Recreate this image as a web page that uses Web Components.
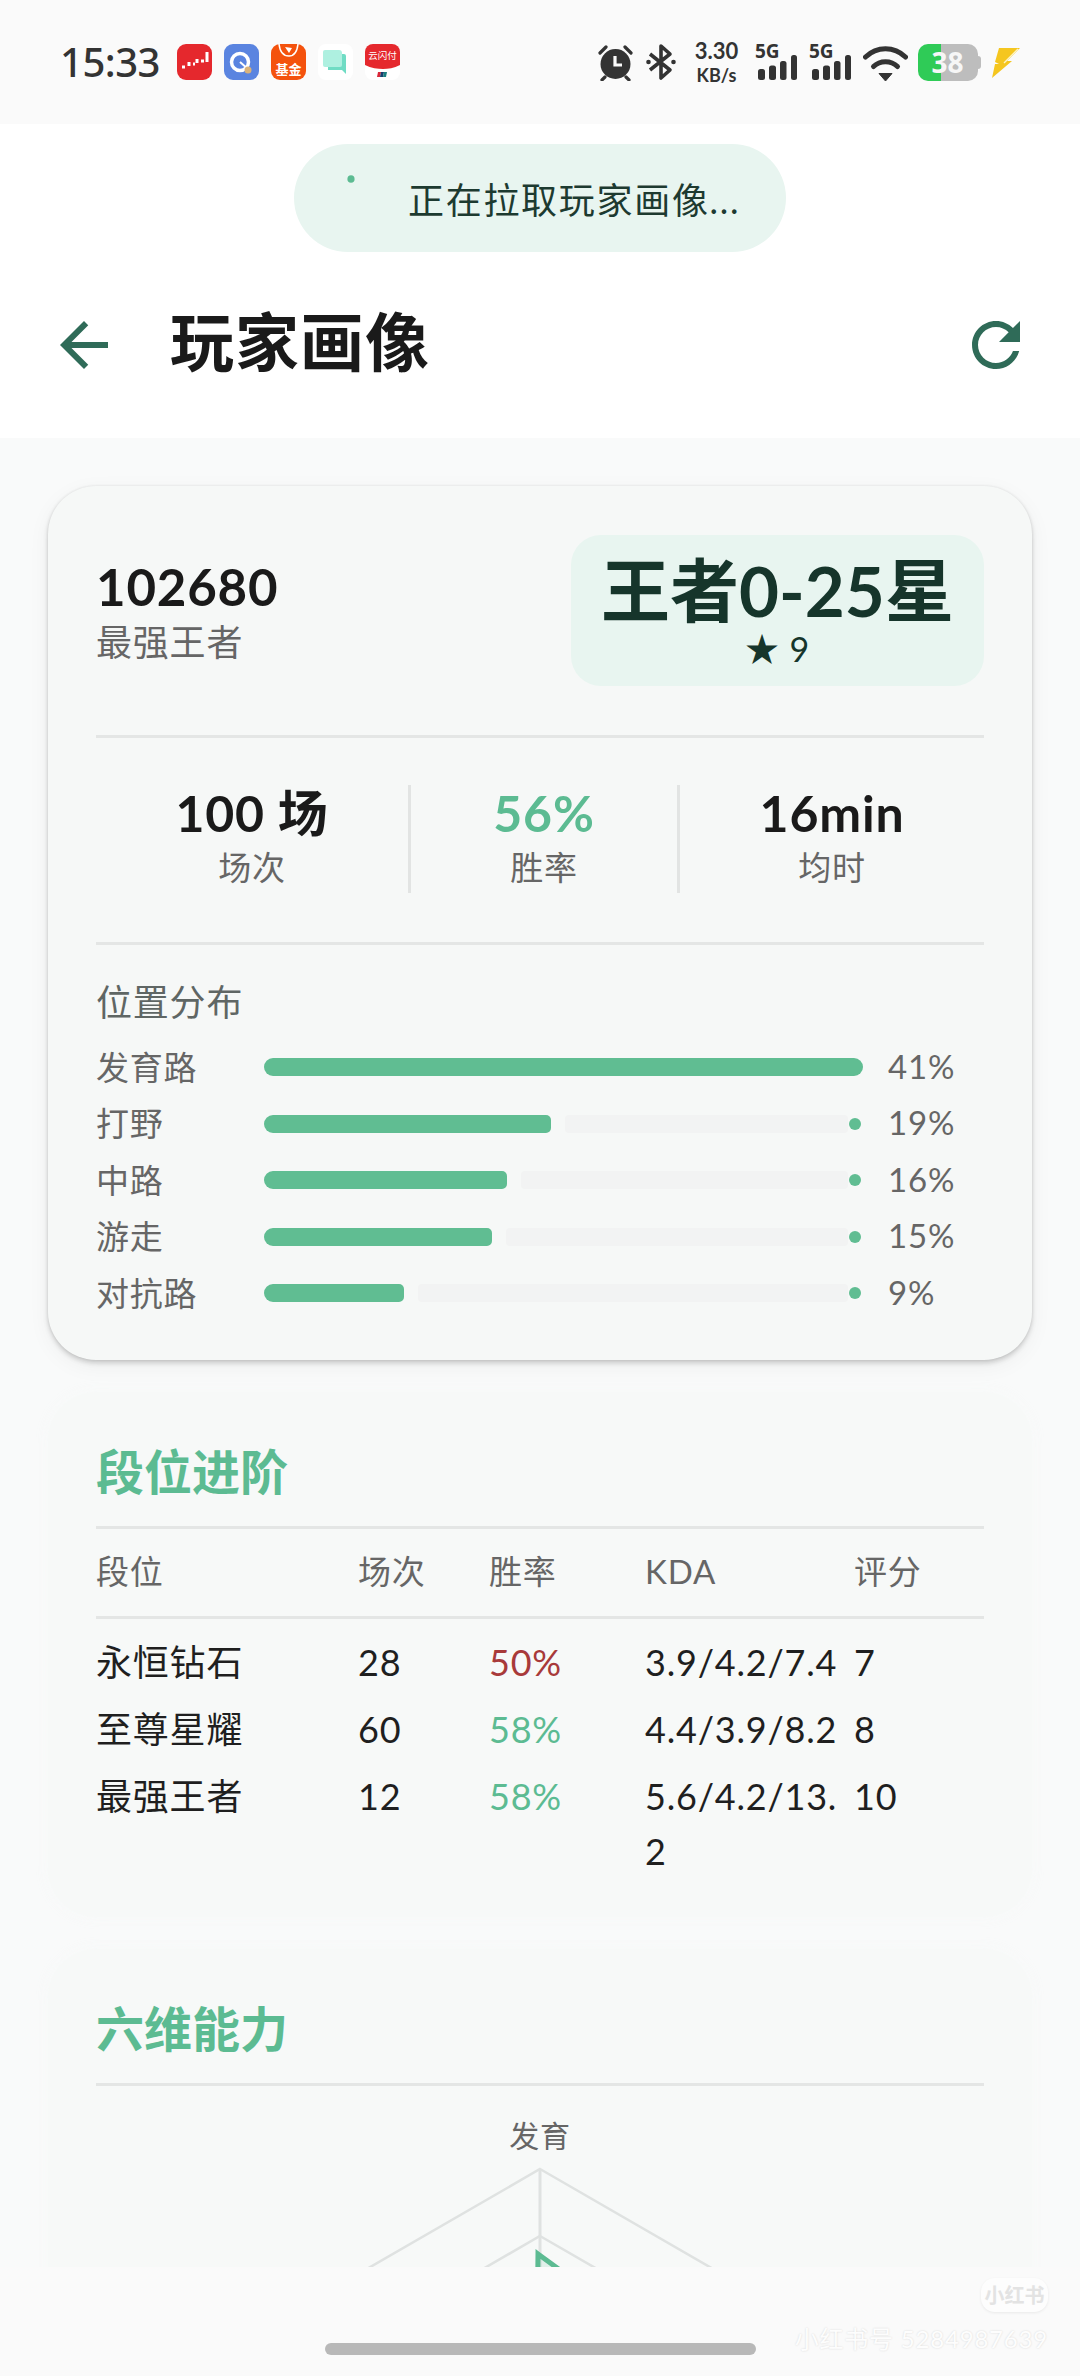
<!DOCTYPE html>
<html lang="zh">
<head>
<meta charset="utf-8">
<title>玩家画像</title>
<style>
  html, body { margin: 0; padding: 0; background: #f9fafa; }
  body { font-family: Lato, "Noto Sans CJK SC", sans-serif; color: #1a1a1a; letter-spacing: .8px; }
</style>
</head>
<body>
<app-shell>
  <status-bar slot="top"></status-bar>
  <load-toast slot="top">正在拉取玩家画像...</load-toast>
  <top-bar slot="top">玩家画像</top-bar>

  <player-card>
    <role-bar name="发育路" value="41" width="100"></role-bar>
    <role-bar name="打野" value="19" width="47.9"></role-bar>
    <role-bar name="中路" value="16" width="40.6"></role-bar>
    <role-bar name="游走" value="15" width="38.1"></role-bar>
    <role-bar name="对抗路" value="9" width="23.4"></role-bar>
  </player-card>

  <section-card heading="段位进阶" pad-bottom="32">
    <rank-row head rank="段位" games="场次" rate="胜率" kda="KDA" score="评分"></rank-row>
    <table-rule></table-rule>
    <div style="height:10px"></div>
    <rank-row rank="永恒钻石" games="28" rate="50%" tone="bad" kda="3.9/4.2/7.4" score="7"></rank-row>
    <rank-row rank="至尊星耀" games="60" rate="58%" tone="good" kda="4.4/3.9/8.2" score="8"></rank-row>
    <rank-row rank="最强王者" games="12" rate="58%" tone="good" kda="5.6/4.2/13.2" score="10"></rank-row>
  </section-card>

  <section-card heading="六维能力" pad-bottom="48">
    <radar-chart></radar-chart>
  </section-card>

  <home-bar slot="bottom"></home-bar>
  <water-mark slot="over"></water-mark>
</app-shell>

<script>
class AppShell extends HTMLElement {
  constructor() {
    super();
    this.attachShadow({ mode: 'open' });
    this.shadowRoot.innerHTML = `
      <style>
        :host { display: flex; flex-direction: column; position: relative; width: 1080px; height: 2376px; overflow: hidden; background: #fafafa; }
        #top { display: block; background: #fff; }
        #main { display: flex; flex-direction: column; gap: 32px; height: 1781px; padding: 48px 48px 0; overflow: hidden; background: #f9fafa; flex: none; }
        #bottom { flex: 1; }
      </style>
      <div id="top"><slot name="top"></slot></div>
      <div id="main"><slot></slot></div>
      <div id="bottom"><slot name="bottom"></slot></div>
      <slot name="over"></slot>
    `;
  }
}

class StatusBar extends HTMLElement {
  constructor() {
    super();
    this.attachShadow({ mode: 'open' });
    const signal = `
      <svg class="sig" width="42" height="44" viewBox="0 -6 42 44">
        <text x="0" y="15" font-size="19" font-weight="700" fill="#333" font-family="Noto Sans" letter-spacing="0">5G</text>
        <rect x="3" y="26" width="7" height="11" rx="2.5" fill="#333"/>
        <rect x="14" y="22.5" width="7" height="14.5" rx="2.5" fill="#333"/>
        <rect x="25" y="18" width="6.5" height="19" rx="2.5" fill="#333"/>
        <rect x="36" y="12" width="6" height="25" rx="2.5" fill="#333"/>
      </svg>`;
    this.shadowRoot.innerHTML = `
      <style>
        :host { display: flex; align-items: center; height: 124px; background: #fafafa; padding: 0 60px 0 60px; box-sizing: border-box; color: #333; letter-spacing: 0; font-family: "Noto Sans", "Noto Sans CJK SC", sans-serif; }
        #time { width: 99px; font-size: 40px; line-height: 40px; font-weight: 500; letter-spacing: -.5px; margin-right: 18px; white-space: nowrap; }
        #apps { display: flex; gap: 12px; }
        #apps svg { display: block; }
        #sys { display: flex; align-items: center; margin-left: auto; }
        #sys > * { flex: none; display: block; }
        #sys .sig { margin-top: -6px; }
        #speed { width: 45px; margin: 2px 16px 0 18px; text-align: center; font-family: Lato, sans-serif; font-weight: 700; }
        #speed div { white-space: nowrap; line-height: 24px; }
        #speed .a { font-size: 22px; }
        #speed .b { font-size: 18px; }
        #batt { position: relative; width: 63px; height: 37px; margin: 0 10px; }
        #batt i { position: absolute; top: 0; left: 0; width: 60px; height: 37px; border-radius: 10px; background: linear-gradient(90deg, #2fcb57 23px, #bdbdbd 23px); }
        #batt b { position: absolute; top: 12px; right: 0; width: 3px; height: 13px; background: #bdbdbd; border-radius: 0 3px 3px 0; }
        #batt span { position: relative; display: block; width: 59px; text-align: center; font-size: 28px; line-height: 37px; font-weight: 700; color: #f6f6f6; }
      </style>
      <div id="time">15:33</div>
      <div id="apps">
        <svg width="35" height="36" viewBox="0 0 35 36">
          <rect width="35" height="36" rx="9" fill="#e5282d"/>
          <path d="M5 23h3M12 22v-4M16 20h2M20 19v-4M24 17h3M30 18V8" stroke="#fff" stroke-width="3" fill="none"/>
        </svg>
        <svg width="35" height="36" viewBox="0 0 35 36">
          <rect width="35" height="36" rx="9" fill="#5a84e0"/>
          <circle cx="16" cy="18" r="8.5" fill="none" stroke="#fff" stroke-width="3.5"/>
          <path d="M16 18l8 7" stroke="#fff" stroke-width="2"/>
          <circle cx="24" cy="26" r="3.5" fill="#d9b27a"/>
        </svg>
        <svg width="35" height="36" viewBox="0 0 35 36">
          <rect width="35" height="36" rx="9" fill="#f4520d"/>
          <path d="M8 0c1 9 5 12 10 12s8-3 9-12" fill="none" stroke="#fff" stroke-width="1.5"/>
          <path d="M14 3l7 1-3 5z" fill="#fff"/>
          <text x="17.5" y="30" text-anchor="middle" font-size="13" font-weight="700" fill="#fff" font-family="Noto Sans CJK SC">基金</text>
        </svg>
        <svg width="35" height="36" viewBox="0 0 35 36">
          <rect width="35" height="36" rx="8" fill="#fff"/>
          <path d="M10 10h16a2 2 0 0 1 2 2v18l-4-4H10z" fill="#6fdcc4"/>
          <path d="M7 6h14a3 3 0 0 1 3 3v12a2 2 0 0 1-2 2H7a2 2 0 0 1-2-2V8a2 2 0 0 1 2-2z" fill="#aef0e0"/>
        </svg>
        <svg width="35" height="36" viewBox="0 0 35 36">
          <rect width="35" height="36" rx="8" fill="#fff"/>
          <path d="M0 8a8 8 0 0 1 8-8h19a8 8 0 0 1 8 8v13c-6 3-12 4-17 4S6 24 0 21z" fill="#e5282d"/>
          <text x="17.5" y="15" text-anchor="middle" font-size="9.5" fill="#fff" font-family="Noto Sans CJK SC">云闪付</text>
          <path d="M13 28h3l-1 5h-3z" fill="#d9283a"/>
          <path d="M16 28h3l-1 5h-3z" fill="#17406f"/>
          <path d="M19 28h3l-1 5h-3z" fill="#1a7f80"/>
        </svg>
      </div>
      <div id="sys">
        <svg width="35" height="37" viewBox="0 0 35 37">
          <path d="M2 9l6-6M33 9l-6-6M7 33l-3 3M28 33l3 3" stroke="#333" stroke-width="3.2" stroke-linecap="round"/>
          <circle cx="17.5" cy="20" r="15" fill="#333"/>
          <path d="M17 12v9h7" fill="none" stroke="#fafafa" stroke-width="3.2"/>
        </svg>
        <svg width="30" height="38" viewBox="0 0 30 38" style="margin-left:13px">
          <path d="M4 11l20 16-9 8V3l9 8L4 27" fill="none" stroke="#333" stroke-width="3.6" stroke-linejoin="round"/>
          <circle cx="2.5" cy="19" r="2.3" fill="#333"/><circle cx="27.5" cy="19" r="2.3" fill="#333"/>
        </svg>
        <div id="speed"><div class="a">3.30</div><div class="b">KB/s</div></div>
        ${signal}
        <span style="width:12px"></span>
        ${signal}
        <svg width="45" height="37" viewBox="0 0 45 37" style="margin-left:12px">
          <path d="M2.5 13C14 2 31 2 42.5 13" fill="none" stroke="#333" stroke-width="5" stroke-linecap="round"/>
          <path d="M10.5 22.5C17 16 28 16 34.5 22.5" fill="none" stroke="#333" stroke-width="5" stroke-linecap="round"/>
          <path d="M16 29.5h13l-6.5 7.5z" fill="#333" stroke="#333" stroke-width="1" stroke-linejoin="round"/>
        </svg>
        <div id="batt"><i></i><b></b><span>38</span></div>
        <svg width="29" height="31" viewBox="0 0 29 31">
          <path d="M8 1h21L16 14l5 0L1 31l3-14h4l-4-2z" fill="#f5c61f"/>
          <path d="M13 16L27 2" stroke="#fdf3c4" stroke-width="1.5"/>
        </svg>
      </div>
    `;
  }
}

class LoadToast extends HTMLElement {
  constructor() {
    super();
    this.attachShadow({ mode: 'open' });
    this.shadowRoot.innerHTML = `
      <style>
        :host { display: flex; justify-content: center; padding-top: 20px; background: #fff; }
        #pill { display: flex; align-items: center; width: 492px; height: 108px; box-sizing: border-box; padding-left: 48px; border-radius: 54px; background: #e8f5f0; color: #1d3a30; font-size: 36px; letter-spacing: 1.7px; white-space: nowrap; }
        svg { display: block; margin-right: 18px; flex: none; }
      </style>
      <div id="pill">
        <svg width="48" height="48" viewBox="0 0 48 48"><ellipse cx="9" cy="5" rx="3.6" ry="3.8" fill="#5cbb92"/></svg>
        <slot></slot>
      </div>
    `;
  }
}

class TopBar extends HTMLElement {
  constructor() {
    super();
    this.attachShadow({ mode: 'open' });
    this.shadowRoot.innerHTML = `
      <style>
        :host { display: flex; align-items: center; height: 186px; padding: 0 48px; background: #fff; }
        svg { display: block; flex: none; fill: #2f6b58; }
        h1 { margin: -6px 0 0 50px; font-size: 64px; line-height: 80px; font-weight: 700; letter-spacing: 1px; color: #1a1a1a; }
        #refresh { margin-left: auto; }
      </style>
      <svg width="72" height="72" viewBox="0 0 24 24"><path d="M20 11H7.83l5.59-5.59L12 4l-8 8 8 8 1.41-1.41L7.83 13H20v-2z"/></svg>
      <h1><slot></slot></h1>
      <svg id="refresh" width="72" height="72" viewBox="0 0 24 24"><path d="M17.65 6.35C16.2 4.9 14.21 4 12 4c-4.42 0-7.99 3.58-7.99 8s3.57 8 7.99 8c3.73 0 6.84-2.55 7.73-6h-2.08c-.82 2.33-3.04 4-5.65 4-3.31 0-6-2.69-6-6s2.69-6 6-6c1.66 0 3.14.69 4.22 1.78L13 11h7V4l-2.35 2.35z"/></svg>
    `;
  }
}

class PlayerCard extends HTMLElement {
  constructor() {
    super();
    this.attachShadow({ mode: 'open' });
    this.shadowRoot.innerHTML = `
      <style>
        :host { display: block; flex: none; box-sizing: border-box; height: 874px; padding: 49px 48px 0; border-radius: 48px; background: #f6f8f7;
          box-shadow: 0 3px 5px rgba(0,0,0,.17), 0 6px 22px rgba(0,0,0,.05), 0 0 3px rgba(0,0,0,.08); }
        #head { display: flex; justify-content: space-between; align-items: flex-start; }
        #who { margin-top: 22px; }
        #id { font-size: 51px; line-height: 60px; font-weight: 700; color: #1a1a1a; }
        #tier { font-size: 36px; line-height: 50px; color: #666; }
        #rank { width: 413px; height: 151px; box-sizing: border-box; padding-top: 18px; border-radius: 30px; background: #e8f5f0; text-align: center; color: #16352b; }
        #rank .big { font-size: 69px; line-height: 76px; font-weight: 700; letter-spacing: 0; white-space: nowrap; }
        #rank .star { font-size: 34px; line-height: 40px; }
        hr { border: 0; height: 3px; margin: 0; background: #e4e6e5; }
        #stats { display: grid; grid-template-columns: 312px 269px 307px; height: 108px; margin: 47px 0 49px; }
        stat-cell + stat-cell { border-left: 3px solid #e2e4e3; }
        #dist { margin-top: 32px; font-size: 36px; line-height: 50px; color: #5f6664; }
        #bars { margin-top: 12px; }
      </style>
      <div id="head">
        <div id="who"><div id="id">102680</div><div id="tier">最强王者</div></div>
        <div id="rank"><div class="big">王者0-25星</div><div class="star">★ 9</div></div>
      </div>
      <hr style="margin-top:49px">
      <div id="stats">
        <stat-cell value="100 场" label="场次"></stat-cell>
        <stat-cell value="56%" label="胜率" tone="good"></stat-cell>
        <stat-cell value="16min" label="均时"></stat-cell>
      </div>
      <hr>
      <div id="dist">位置分布</div>
      <div id="bars"><slot></slot></div>
    `;
  }
}

class StatCell extends HTMLElement {
  constructor() {
    super();
    this.attachShadow({ mode: 'open' });
    const good = this.getAttribute('tone') === 'good';
    this.shadowRoot.innerHTML = `
      <style>
        :host { display: block; text-align: center; }
        #v { font-size: 50px; line-height: 56px; font-weight: 700; color: ${good ? '#5cbb92' : '#1a1a1a'}; white-space: nowrap; }
        #l { font-size: 33px; line-height: 52px; color: #666; }
      </style>
      <div id="v">${this.getAttribute('value')}</div>
      <div id="l">${this.getAttribute('label')}</div>
    `;
  }
}

class RoleBar extends HTMLElement {
  constructor() {
    super();
    this.attachShadow({ mode: 'open' });
    const width = parseFloat(this.getAttribute('width'));
    const full = width >= 100;
    this.shadowRoot.innerHTML = `
      <style>
        :host { display: grid; grid-template-columns: 168px 599px 1fr; align-items: center; height: 56.5px; font-size: 33px; color: #666; }
        #name, #pct { padding-bottom: 3px; }
        #track { display: flex; position: relative; height: 18px; }
        #fill { height: 18px; width: ${width}%; background: #60bd92; border-radius: ${full ? '9px' : '9px 5px 5px 9px'}; flex: none; }
        #rest { flex: 1; margin: 0 15px 0 14px; height: 18px; background: #f2f3f3; border-radius: 4px; display: ${full ? 'none' : 'block'}; }
        #stop { position: absolute; right: 2px; top: 3px; width: 12px; height: 12px; border-radius: 50%; background: #60bd92; display: ${full ? 'none' : 'block'}; }
        #pct { padding-left: 25px; white-space: nowrap; }
      </style>
      <div id="name">${this.getAttribute('name')}</div>
      <div id="track"><div id="fill"></div><div id="rest"></div><div id="stop"></div></div>
      <div id="pct">${this.getAttribute('value')}%</div>
    `;
  }
}

class SectionCard extends HTMLElement {
  constructor() {
    super();
    this.attachShadow({ mode: 'open' });
    this.shadowRoot.innerHTML = `
      <style>
        :host { display: block; flex: none; padding: 48px 48px ${this.getAttribute('pad-bottom')}px; border-radius: 48px; background: #f7f9f8; box-shadow: 0 0 14px rgba(247,249,248,.9); }
        h2 { margin: 0 0 22px; font-size: 48px; line-height: 64px; font-weight: 700; letter-spacing: 0; color: #5cbb92; }
        hr { border: 0; height: 3px; margin: 0; background: #e4e6e5; }
      </style>
      <h2>${this.getAttribute('heading')}</h2>
      <hr>
      <slot></slot>
    `;
  }
}

class TableRule extends HTMLElement {
  constructor() {
    super();
    this.attachShadow({ mode: 'open' });
    this.shadowRoot.innerHTML = `<style>:host { display: block; height: 3px; background: #e4e6e5; }</style>`;
  }
}

class RankRow extends HTMLElement {
  constructor() {
    super();
    this.attachShadow({ mode: 'open' });
    const head = this.hasAttribute('head');
    const tone = this.getAttribute('tone');
    const rateColor = tone === 'bad' ? '#a83a3a' : tone === 'good' ? '#5cbb92' : 'inherit';
    const attr = (n) => this.getAttribute(n);
    this.shadowRoot.innerHTML = `
      <style>
        :host { display: grid; grid-template-columns: 262px 131px 156px 209px 1fr; align-items: start;
          ${head ? 'height: 87px; align-content: center; font-size: 33px; line-height: 50px; color: #666; padding-bottom: 0;' : 'padding: 6px 0; font-size: 36px; line-height: 55px; color: #1f1f1f;'} }
        #kda { padding-right: 13px; word-break: break-all; }
        #rate { color: ${rateColor}; }
        div { ${head ? 'margin-top: -3px;' : ''} }
      </style>
      <div>${attr('rank')}</div>
      <div>${attr('games')}</div>
      <div id="rate">${attr('rate')}</div>
      <div id="kda">${attr('kda')}</div>
      <div>${attr('score')}</div>
    `;
  }
}

class RadarChart extends HTMLElement {
  constructor() {
    super();
    this.attachShadow({ mode: 'open' });
    // centre sits below the fold, only the top of the chart shows
    const cx = 444, cy = 281;
    const ring = (r) => {
      const pts = [];
      for (let i = 0; i < 6; i++) {
        const a = (Math.PI / 3) * i - Math.PI / 2;
        pts.push((cx + r * Math.cos(a)).toFixed(1) + ',' + (cy + r * Math.sin(a)).toFixed(1));
      }
      return `<polygon points="${pts.join(' ')}" fill="none" stroke="#dfe2e1" stroke-width="2.5"/>`;
    };
    this.shadowRoot.innerHTML = `
      <style>
        :host { display: block; padding-top: 28px; text-align: center; }
        #top { font-size: 30px; line-height: 42px; color: #666; }
        svg { display: block; }
      </style>
      <div id="top">发育</div>
      <svg width="888" height="560" viewBox="0 0 888 560">
        ${ring(268)}${ring(201)}${ring(134)}${ring(67)}
        <path d="M${cx} ${cy}V13" stroke="#dfe2e1" stroke-width="3"/>
        <polygon points="442,98 560,184 440,300" fill="#5cbb92" fill-opacity=".15" stroke="#5cbb92" stroke-width="5" stroke-linejoin="miter"/>
      </svg>
    `;
  }
}

class HomeBar extends HTMLElement {
  constructor() {
    super();
    this.attachShadow({ mode: 'open' });
    this.shadowRoot.innerHTML = `
      <style>
        :host { display: flex; justify-content: center; padding-top: 76px; }
        div { width: 431px; height: 12px; border-radius: 6px; background: #b8b8b8; }
      </style>
      <div></div>
    `;
  }
}

class WaterMark extends HTMLElement {
  constructor() {
    super();
    this.attachShadow({ mode: 'open' });
    this.shadowRoot.innerHTML = `
      <style>
        :host { position: absolute; right: 32px; top: 2278px; display: flex; flex-direction: column; align-items: flex-end; }
        #logo { width: 67px; height: 34px; border-radius: 14px; background: #fdfdfd; box-shadow: 0 1px 3px rgba(0,0,0,.07); text-align: center; font-size: 20px; line-height: 34px; font-weight: 700; letter-spacing: 0; color: #e3e3e3; }
        #num { margin-top: 12px; font-size: 24px; line-height: 30px; color: #fdfdfd; text-shadow: 0 0 2px rgba(0,0,0,.15); white-space: nowrap; }
      </style>
      <div id="logo">小红书</div>
      <div id="num">小红书号 5284987639</div>
    `;
  }
}

customElements.define('app-shell', AppShell);
customElements.define('status-bar', StatusBar);
customElements.define('load-toast', LoadToast);
customElements.define('top-bar', TopBar);
customElements.define('player-card', PlayerCard);
customElements.define('stat-cell', StatCell);
customElements.define('role-bar', RoleBar);
customElements.define('section-card', SectionCard);
customElements.define('table-rule', TableRule);
customElements.define('rank-row', RankRow);
customElements.define('radar-chart', RadarChart);
customElements.define('home-bar', HomeBar);
customElements.define('water-mark', WaterMark);
</script>
</body>
</html>
